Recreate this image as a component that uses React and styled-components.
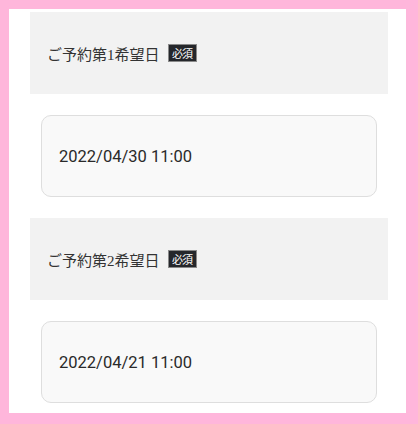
import { Fragment } from 'react';
import styled, { createGlobalStyle } from 'styled-components';

const GlobalStyle = createGlobalStyle`
  html, body {
    margin: 0;
    padding: 0;
    background: #ffb6db;
  }
  * { box-sizing: border-box; }
`

const Page = styled.div`
  width: 418px;
  height: 424px;
  padding: 9px 12px 11px 9px;
`

const Sheet = styled.div`
  background: #fff;
  height: 100%;
  padding: 3px 18px 0 21px;
  display: flex;
  flex-direction: column;
  gap: 21px;
`

const Head = styled.div`
  height: 82px;
  background: #f2f2f2;
  display: flex;
  align-items: center;
  padding-left: 17px;
  gap: 8px;
  font-family: "Liberation Serif", "Noto Sans CJK JP", serif;
  font-size: 15px;
  color: #333;
`

const Required = styled.span`
  display: inline-flex;
  align-items: center;
  justify-content: center;
  width: 29px;
  height: 18px;
  background: #25272b;
  border: 1px solid #8a8a8a;
  color: #fff;
  font-size: 11px;
  font-family: "Liberation Serif", "Noto Sans CJK JP", serif;
  letter-spacing: -1px;
`

const Field = styled.div`
  margin: 0 11px;
  height: 82px;
  background: #f9f9f9;
  border: 1px solid #dedede;
  border-radius: 10px;
  display: flex;
  align-items: center;
  padding-left: 17px;
  font-family: Roboto, "Liberation Sans", sans-serif;
  font-size: 16.5px;
  color: #2a2a2a;
`

const items = [
  { label: 'ご予約第1希望日', value: '2022/04/30 11:00' },
  { label: 'ご予約第2希望日', value: '2022/04/21 11:00' },
]

const App = () => {
  return (
    <Page>
      <GlobalStyle />
      <Sheet>
        {items.map((item) => (
          <Fragment key={item.label}>
            <Head>
              {item.label}
              <Required>必須</Required>
            </Head>
            <Field>{item.value}</Field>
          </Fragment>
        ))}
      </Sheet>
    </Page>
  )
}

export default App
